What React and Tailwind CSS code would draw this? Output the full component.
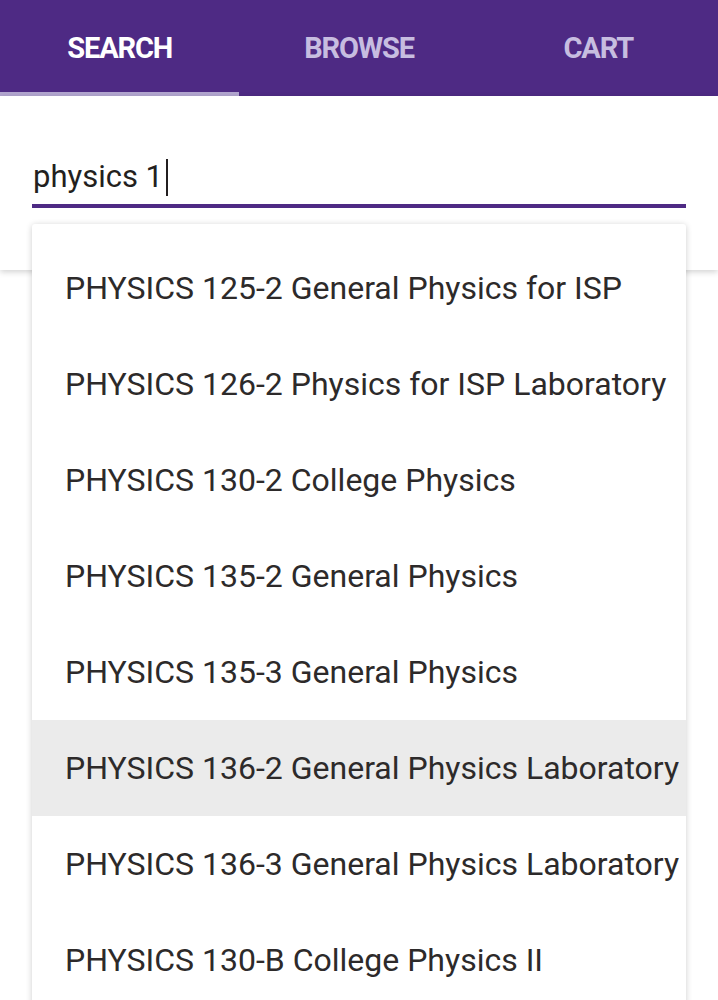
const tabs = ['SEARCH', 'BROWSE', 'CART']

const results = [
  'PHYSICS 125-2 General Physics for ISP',
  'PHYSICS 126-2 Physics for ISP Laboratory',
  'PHYSICS 130-2 College Physics',
  'PHYSICS 135-2 General Physics',
  'PHYSICS 135-3 General Physics',
  'PHYSICS 136-2 General Physics Laboratory',
  'PHYSICS 136-3 General Physics Laboratory',
  'PHYSICS 130-B College Physics II',
]

export default function App() {
  return (
    <div className="w-[718px] h-[1000px] overflow-hidden bg-white font-['Roboto',sans-serif]">
      {/* Tabs */}
      <div className="flex h-[96px] bg-[#4e2a84]">
        {tabs.map((t, i) => (
          <div key={t} className="flex-1 flex flex-col">
            <div
              className={`flex-1 flex items-center justify-center pt-[6px] text-[29px] font-bold tracking-[-0.04em] ${
                i === 0 ? 'text-white' : 'text-[#c7bde0]'
              }`}
            >
              {t}
            </div>
            <div className={`h-[4px] ${i === 0 ? 'bg-[#b2a5cf]' : ''}`} />
          </div>
        ))}
      </div>

      {/* Search panel */}
      <div className="relative h-[174px] bg-white shadow-[0_2px_6px_rgba(0,0,0,0.18)] px-[32px] pt-[54px]">
        <div className="flex items-center h-[58px] border-b-4 border-[#4e2a84]">
          <span className="text-[31px] text-[#231f20] pl-[1px]">physics 1</span>
          <span className="w-[2px] h-[37px] bg-[#231f20] ml-[3px]" />
        </div>

        {/* Autocomplete dropdown */}
        <div className="absolute left-[32px] right-[32px] top-[128px] bg-white rounded-[3px] shadow-[0_1px_6px_rgba(0,0,0,0.2)] pt-[16px]">
          {results.map((r, i) => (
            <div
              key={r}
              className={`h-[96px] flex items-center pl-[33px] text-[32px] text-[#2d2a2a] whitespace-nowrap ${
                i === 5 ? 'bg-[#ebebeb]' : ''
              }`}
            >
              {r}
            </div>
          ))}
        </div>
      </div>
    </div>
  )
}
